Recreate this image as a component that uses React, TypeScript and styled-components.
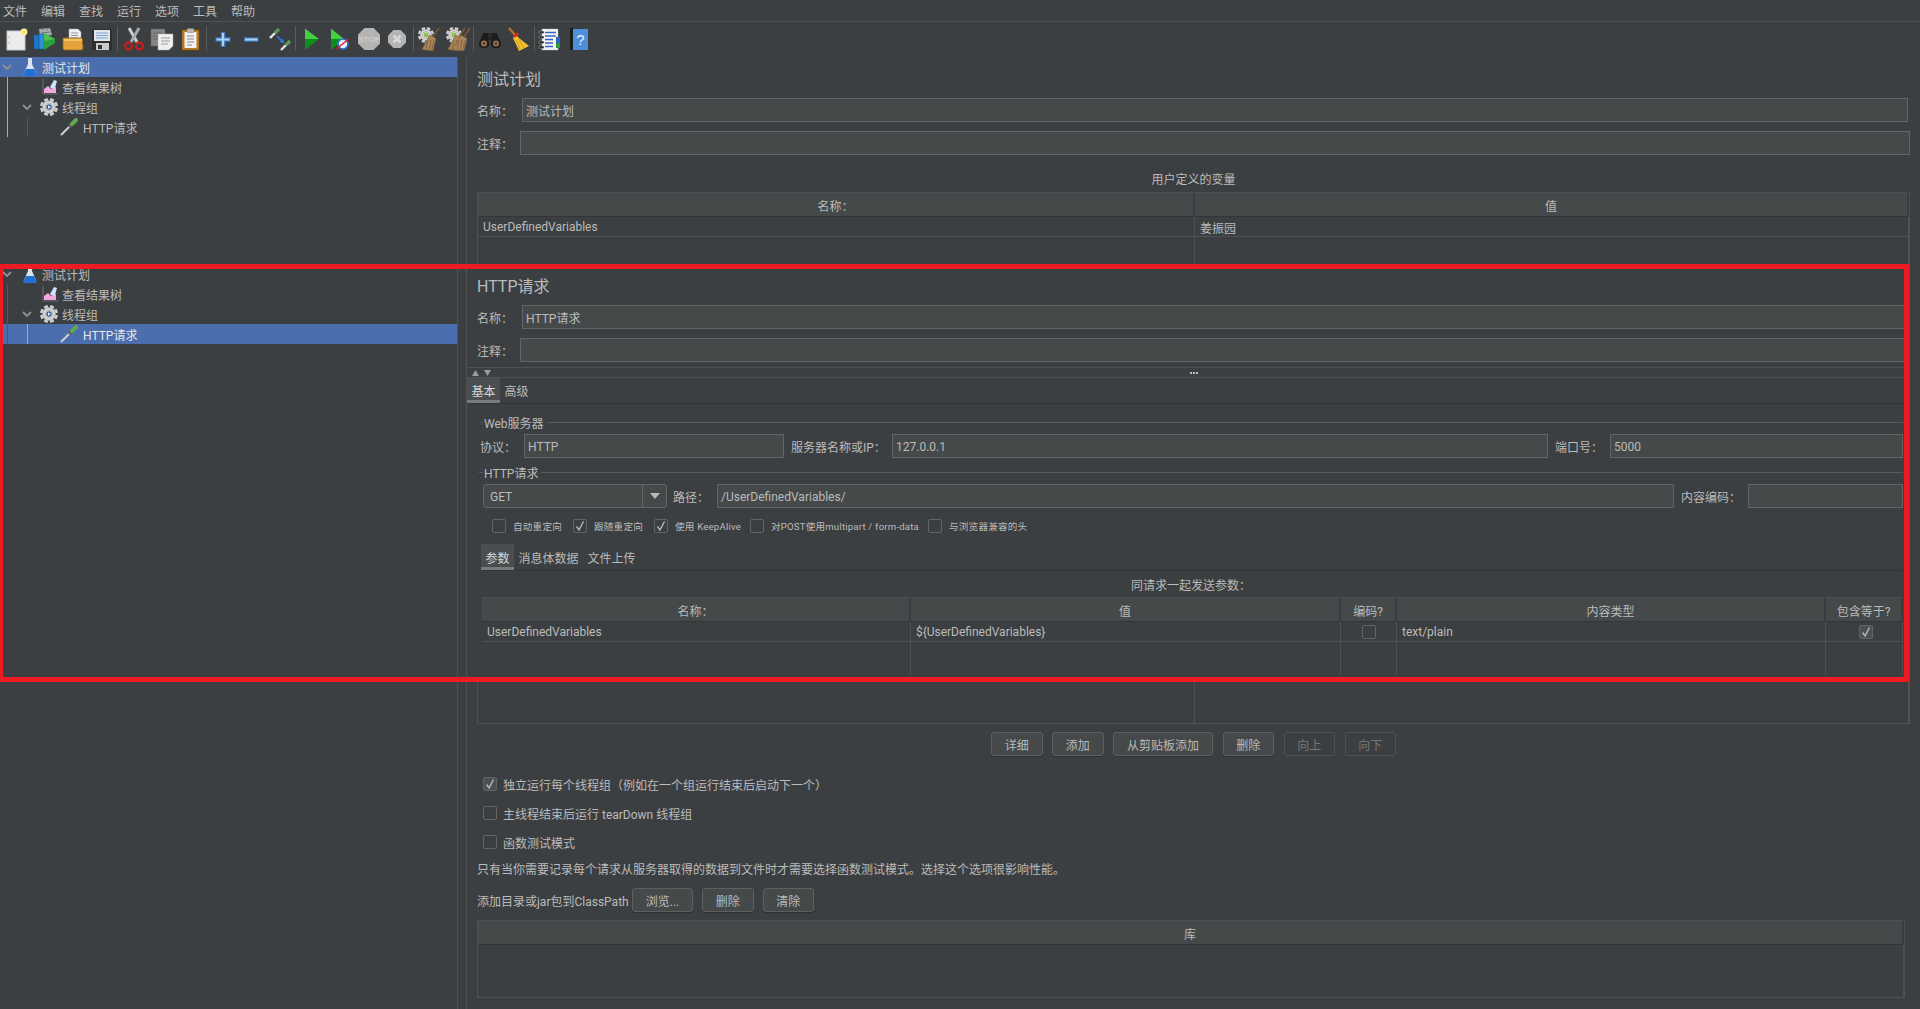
import React from "react";
import styled, { createGlobalStyle } from "styled-components";

const MENUS = ["文件", "编辑", "查找", "运行", "选项", "工具", "帮助"];

const Svg = ({ size = 24, children }: any) => (
  <svg width={size} height={size} viewBox="0 0 24 24">
    {children}
  </svg>
);

const Gear = ({ cx, cy, r, hub }: any) => (
  <g>
    {Array.from({ length: 4 }).map((_, i) => (
      <rect
        key={i}
        x={cx - r * 0.22}
        y={cy - r}
        width={r * 0.44}
        height={r * 2}
        fill="#cfcfcf"
        transform={`rotate(${i * 45 + 22.5} ${cx} ${cy})`}
      />
    ))}
    <circle cx={cx} cy={cy} r={r * 0.7} fill="#d8d8d8" stroke="#8f8f8f" strokeWidth={0.5} />
    <circle cx={cx} cy={cy} r={r * 0.42} fill="#f1f1f1" stroke="#7d7d7d" strokeWidth={0.5} />
    <circle cx={cx} cy={cy} r={r * 0.3} fill={hub} />
  </g>
);

const BrownBroom = ({ x = 0 }: any) => (
  <g transform={`translate(${x} 0)`}>
    <path d="M22 1 L15 11" stroke="#7d5a33" strokeWidth="1.6" />
    <path d="M12.500 8 L19 11.500 L16 24 L5 22.500 Z" fill="#a9835a" stroke="#7a5a38" strokeWidth="0.5" />
    <path d="M11 13 L9 22 M14 13 L12.500 23 M17 13 L15 23" stroke="#7a5a38" strokeWidth="0.7" />
  </g>
);

const NewIcon = () => (
  <Svg>
    <rect x="3" y="4" width="18" height="19" fill="#ececec" stroke="#c8c8c8" />
    <circle cx="5" cy="10" r="0.7" fill="#999" />
    <circle cx="5" cy="16" r="0.7" fill="#999" />
    <circle cx="20" cy="5" r="3.4" fill="#fff2a0" />
    <circle cx="20" cy="5" r="1.8" fill="#ffe040" />
  </Svg>
);
const TemplatesIcon = () => (
  <Svg>
    <path d="M6 2 L17 1 L19 8 L7 9 Z" fill="#a8afb0" />
    <path d="M9 3 L12 1 M13 3 L16 1 M8 6 L17 5" stroke="#6d7475" strokeWidth="1" />
    <rect x="1" y="8" width="5" height="14" fill="#1f78c8" stroke="#0d4f8f" strokeWidth="0.5" />
    <rect x="6" y="7" width="5" height="15" fill="#2f8fd8" stroke="#0d4f8f" strokeWidth="0.5" />
    <path d="M11 6 L22 12 V16 L11 23 Z" fill="#27a13a" />
    <path d="M11 6 L22 12 L11 14 Z" fill="#4dc24f" />
  </Svg>
);
const OpenIcon = () => (
  <Svg>
    <path d="M8 2 H17 L20 5 V14 H8 Z" fill="#eee" stroke="#aaa" strokeWidth="0.5" />
    <path d="M10 6 H17 M10 8.5 H17 M10 11 H17" stroke="#999" strokeWidth="1" />
    <path d="M2 11 H21 L22 21 Q22 23 20 23 H4 Q2 23 2 21 Z" fill="#e3a33a" stroke="#96671c" strokeWidth="0.8" />
    <rect x="3" y="12" width="18" height="2" fill="#f2c265" />
  </Svg>
);
const SaveIcon = () => (
  <Svg>
    <rect x="2" y="2" width="20" height="21" rx="1.5" fill="#2e2e2e" />
    <rect x="4" y="3" width="16" height="11" fill="#dfe6ee" />
    <path d="M6 6 H18 M6 8.5 H18 M6 11 H18" stroke="#7fa3cf" strokeWidth="1" />
    <rect x="6" y="16" width="13" height="7" fill="#c9c9c9" />
    <rect x="8" y="18" width="4" height="4" fill="#333" />
  </Svg>
);
const CutIcon = () => (
  <Svg>
    <path d="M7 1 L15 15" stroke="#cfcfcf" strokeWidth="3" />
    <path d="M17 1 L9 15" stroke="#a9a9a9" strokeWidth="3" />
    <circle cx="6.5" cy="19" r="3.4" fill="none" stroke="#c81e1e" strokeWidth="2.2" />
    <circle cx="17.5" cy="19" r="3.4" fill="none" stroke="#c81e1e" strokeWidth="2.2" />
  </Svg>
);
const CopyIcon = () => (
  <Svg>
    <rect x="1" y="2" width="14" height="17" fill="#858585" stroke="#666" strokeWidth="0.5" />
    <path d="M3 6 H12 M3 9 H12 M3 12 H8" stroke="#666" strokeWidth="1" />
    <path d="M8 7 H23 V19 L19 23 H8 Z" fill="#efefef" stroke="#aaa" strokeWidth="0.5" />
    <path d="M11 11 H20 M11 14 H20 M11 17 H18" stroke="#999" strokeWidth="1" />
  </Svg>
);
const PasteIcon = () => (
  <Svg>
    <rect x="3" y="3" width="17" height="20" rx="1" fill="#bd7a22" stroke="#85540f" strokeWidth="0.6" />
    <rect x="5.5" y="5" width="12" height="16" fill="#f1f1f1" />
    <rect x="8" y="1.5" width="7" height="4" rx="1" fill="#b9b9b9" stroke="#777" strokeWidth="0.5" />
    <path d="M8 9 H15 M8 12 H15 M8 15 H15 M8 18 H13" stroke="#888" strokeWidth="1" />
  </Svg>
);
const PlusIcon = () => (
  <Svg>
    <path d="M12 5 V20 M4.5 12.5 H19.5" stroke="#3a78bd" strokeWidth="4.4" />
    <path d="M12 6 V19 M5.5 12.5 H18.5" stroke="#a9d0f5" strokeWidth="2.2" />
  </Svg>
);
const MinusIcon = () => (
  <Svg>
    <path d="M5 12.5 H19.5" stroke="#3a78bd" strokeWidth="4.4" />
    <path d="M6 12.5 H18.5" stroke="#a9d0f5" strokeWidth="2.2" />
  </Svg>
);
const ToggleIcon = () => (
  <Svg>
    <path d="M2 11 L7 6" stroke="#e8e8e8" strokeWidth="2.4" />
    <path d="M7 6 L11 2" stroke="#5f9a55" strokeWidth="3.2" />
    <path d="M9 9 L15 15" stroke="#2a7ad9" strokeWidth="1.6" />
    <path d="M16.5 16.5 L11.5 15 L15 11.5 Z" fill="#2a7ad9" />
    <path d="M13 23 L18 18" stroke="#e0e0e0" strokeWidth="2.4" />
    <path d="M18 18 L22 14" stroke="#5f9a55" strokeWidth="3.2" />
  </Svg>
);
const StartIcon = () => (
  <Svg>
    <path d="M5 1.5 L19 12 L5 12 Z" fill="#43cf3f" />
    <path d="M5 12 L19 12 L5 23 Z" fill="#0a8f1c" />
  </Svg>
);
const StartNoPauseIcon = () => (
  <Svg>
    <path d="M3 1.5 L16 12 L3 12 Z" fill="#43cf3f" />
    <path d="M3 12 L16 12 L3 23 Z" fill="#0a8f1c" />
    <circle cx="15" cy="17" r="5" fill="#e6eefb" stroke="#2a6fd0" strokeWidth="1.6" />
    <path d="M8 22 L21 12" stroke="#d61f1f" strokeWidth="1.4" />
  </Svg>
);
const StopIcon = () => (
  <svg width="24" height="24" viewBox="0 0 24 24">
    <path d="M7.5 1 H16.5 L23 7.5 V16.5 L16.5 23 H7.5 L1 16.5 V7.5 Z" fill="#b4b4b4" />
    <text x="12" y="15" textAnchor="middle" fontSize="8" fontWeight="700" fontFamily="Liberation Sans" fill="#cecece">
      STOP
    </text>
  </svg>
);
const ShutdownIcon = () => (
  <Svg>
    <path d="M8.5 3 H15.5 L21 8.5 V15.5 L15.5 21 H8.5 L3 15.5 V8.5 Z" fill="#b4b4b4" />
    <path d="M8.5 8.5 L15.5 15.5 M15.5 8.5 L8.5 15.5" stroke="#d8d8d8" strokeWidth="2.6" />
  </Svg>
);
const ClearIcon = () => (
  <Svg>
    <Gear cx={9} cy={8} r={8} hub="#8bc34a" />
    <BrownBroom />
  </Svg>
);
const ClearAllIcon = () => (
  <Svg>
    <Gear cx={8} cy={8} r={8} hub="#8bc34a" />
    <BrownBroom x={-3} />
    <BrownBroom x={2} />
  </Svg>
);
const BinocularsIcon = () => (
  <Svg>
    <rect x="8" y="6" width="8" height="7" fill="#2a2a2a" />
    <path d="M5 6 H10 L11 18 H1 Z" fill="#1c1c1c" />
    <path d="M14 6 H19 L23 18 H13 Z" fill="#1c1c1c" />
    <circle cx="6" cy="16.5" r="5" fill="#1c1c1c" />
    <circle cx="18" cy="16.5" r="5" fill="#1c1c1c" />
    <circle cx="6" cy="16.5" r="3" fill="#9a7458" />
    <circle cx="18" cy="16.5" r="3" fill="#9a7458" />
    <circle cx="6" cy="16.5" r="1.3" fill="#4a3527" />
    <circle cx="18" cy="16.5" r="1.3" fill="#4a3527" />
  </Svg>
);
const BroomIcon = () => (
  <Svg>
    <path d="M3 1 L10 9" stroke="#a66f2c" strokeWidth="2.6" />
    <path d="M9 7 L13 11 L23 19 L13 24 L7 11 Z" fill="#efc12f" />
    <path d="M10 13 L14 22 M13 12 L18 21" stroke="#c2941a" strokeWidth="0.8" />
    <path d="M7.5 10 L12.5 6.5" stroke="#d8261f" strokeWidth="2.4" />
  </Svg>
);
const FunctionIcon = () => (
  <Svg>
    <rect x="4" y="2" width="16" height="21" fill="#f4f4f4" stroke="#bbb" strokeWidth="0.4" />
    <path d="M7 5.5 H18 M7 9 H18 M7 12.5 H15 M7 16 H15 M7 19.5 H15" stroke="#2f66c6" strokeWidth="1.3" />
    <rect x="18" y="10" width="4" height="6" fill="#2d63c0" />
    <rect x="18" y="16" width="4" height="5" fill="#2a9a3c" />
    {[5, 10, 15, 20].map((y) => (
      <rect key={y} x="1" y={y - 1} width="5" height="2.4" rx="1" fill="#222" stroke="#ddd" strokeWidth="0.4" />
    ))}
  </Svg>
);
const HelpIcon = () => (
  <Svg>
    <rect x="3" y="1" width="4" height="22" fill="#1d1d1d" />
    <rect x="6" y="2" width="15" height="21" fill="#4f8edb" />
    <text x="13.5" y="18" textAnchor="middle" fontSize="15" fontFamily="Liberation Sans" fill="#e9f1fb">
      ?
    </text>
  </Svg>
);

const TOOLS: any[] = [
  [NewIcon, TemplatesIcon, OpenIcon, SaveIcon],
  [CutIcon, CopyIcon, PasteIcon],
  [PlusIcon, MinusIcon, ToggleIcon],
  [StartIcon, StartNoPauseIcon, StopIcon, ShutdownIcon],
  [ClearIcon, ClearAllIcon],
  [BinocularsIcon, BroomIcon],
  [FunctionIcon, HelpIcon],
];

const FlaskIcon = () => (
  <svg width="14" height="20" viewBox="0 0 14 20">
    <path d="M5 1 H9 V7 L13 16 Q14 19 11.500 19 H2.500 Q0 19 1 16 L5 7 Z" fill="#dbe3ec" />
    <path d="M3 12 H11 L13 16 Q14 19 11.500 19 H2.500 Q0 19 1 16 Z" fill="#1f6fd6" />
  </svg>
);
const ResultTreeIcon = () => (
  <svg width="16" height="18" viewBox="0 0 16 18">
    <path d="M1 1 V16 H16" stroke="#6d6d6d" fill="none" />
    <path d="M2 15 V11 L6 8 L9 11 L14 9 V15 Z" fill="#f4a6e0" />
    <path d="M8 9 L12 2 L15 3 L13 10 Q10 12 8 9 Z" fill="#cfe2fb" />
  </svg>
);
const ThreadGroupIcon = () => (
  <svg width="18" height="18" viewBox="0 0 18 18">
    <Gear cx={9} cy={9} r={9} hub="#2f5f9f" />
    <path d="M8 7.200 L11 9 L8 10.800 Z" fill="#dfe9f7" />
  </svg>
);
const SamplerIcon = () => (
  <svg width="18" height="18" viewBox="0 0 18 18">
    <path d="M1 17 L10 8" stroke="#d0d0d0" strokeWidth="2" />
    <path d="M9 9 L13 5" stroke="#5c5c5c" strokeWidth="3.500" />
    <path d="M12 6 L16 2" stroke="#62a650" strokeWidth="4" strokeLinecap="round" />
  </svg>
);

const Chevron = () => (
  <ChevronBox>
    <svg width="10" height="6" viewBox="0 0 10 6">
      <path d="M1 1 L5 5 L9 1" fill="none" stroke="#8e9193" strokeWidth="1.800" />
    </svg>
  </ChevronBox>
);

const Tree = ({ active }: any) => {
  const onPlan = active === "plan";
  return (
    <TreePane>
      <TreeRow $selected={onPlan}>
        <Chevron />
        <NodeSlot $gap={9} $width={14}>
          <FlaskIcon />
        </NodeSlot>
        <NodeText $gap={5}>测试计划</NodeText>
      </TreeRow>
      <TreeRow>
        <Guide $lit={onPlan} />
        <NodeSlot $gap={15} $width={16}>
          <ResultTreeIcon />
        </NodeSlot>
        <NodeText $gap={4}>查看结果树</NodeText>
      </TreeRow>
      <TreeRow>
        <Guide $lit={onPlan} />
        <Chevron />
        <NodeSlot $gap={6} $width={18}>
          <ThreadGroupIcon />
        </NodeSlot>
        <NodeText $gap={4}>线程组</NodeText>
      </TreeRow>
      <TreeRow $selected={!onPlan}>
        <Guide $lit={onPlan} />
        <Guide $lit={!onPlan} />
        <NodeSlot $gap={13} $width={18}>
          <SamplerIcon />
        </NodeSlot>
        <NodeText $gap={5}>HTTP请求</NodeText>
      </TreeRow>
    </TreePane>
  );
};

const Tick = () => (
  <svg width="12" height="12" viewBox="0 0 12 12">
    <path d="M2.500 6.500 L5 10 L9.500 1.500" fill="none" stroke="#b8b8b8" strokeWidth="1.400" />
  </svg>
);

const Check = ({ checked, filled }: any) => (
  <CheckBox $filled={filled}>{checked && <Tick />}</CheckBox>
);

const OPTIONS = [
  { label: "自动重定向", checked: false, width: 81 },
  { label: "跟随重定向", checked: true, width: 81 },
  { label: "使用 KeepAlive", checked: true, width: 96 },
  { label: "对POST使用multipart / form-data", checked: false, width: 178 },
  { label: "与浏览器兼容的头", checked: false, width: 120 },
];

const HttpPanel = () => (
  <>
    <Head>
      <Title>HTTP请求</Title>
      <FieldRow>
        <Label $width={45}>名称：</Label>
        <TextField>HTTP请求</TextField>
      </FieldRow>
      <FieldRow $top={9}>
        <Label $width={43}>注释：</Label>
        <TextField />
      </FieldRow>
    </Head>
    <SplitStrip>
      <SplitArrows>
        <svg width="20" height="6" viewBox="0 0 20 6">
          <path d="M0 6 L3.500 0 L7 6 Z M12 0 L19 0 L15.500 6 Z" fill="#9c9c9c" />
        </svg>
      </SplitArrows>
      <Dots>
        <i />
        <i />
        <i />
      </Dots>
      <span />
    </SplitStrip>
    <TabBar>
      <Tab $active>基本</Tab>
      <Tab>高级</Tab>
    </TabBar>
    <Section>
      <Legend>Web服务器</Legend>
      <FieldRow $left={1}>
        <Label $width={44}>协议：</Label>
        <TextField $width={260}>HTTP</TextField>
        <Label $width={101} $gap={7}>服务器名称或IP：</Label>
        <TextField $width={656}>127.0.0.1</TextField>
        <Label $width={55} $gap={7}>端口号：</Label>
        <TextField>5000</TextField>
      </FieldRow>
      <Legend $top={5}>HTTP请求</Legend>
      <FieldRow $left={4}>
        <Combo>
          <ComboValue>GET</ComboValue>
          <ComboArrow>
            <svg width="10" height="6" viewBox="0 0 10 6">
              <path d="M0 0 H10 L5 6 Z" fill="#bbbbbb" />
            </svg>
          </ComboArrow>
        </Combo>
        <Label $width={44} $gap={6}>路径：</Label>
        <TextField $width={957}>/UserDefinedVariables/</TextField>
        <Label $width={67} $gap={7}>内容编码：</Label>
        <TextField />
      </FieldRow>
      <OptionRow>
        {OPTIONS.map((o) => (
          <Option key={o.label} $width={o.width}>
            <Check checked={o.checked} />
            <OptionText>{o.label}</OptionText>
          </Option>
        ))}
      </OptionRow>
      <InnerTabs>
        <Tab $active>参数</Tab>
        <Tab>消息体数据</Tab>
        <Tab>文件上传</Tab>
      </InnerTabs>
      <Caption $height={26}>同请求一起发送参数：</Caption>
      <Grid $cols="429px 430px 56px 429px 1fr" $height={77} $indent={3} $bare>
        <HeadCell>名称：</HeadCell>
        <HeadCell>值</HeadCell>
        <HeadCell>编码?</HeadCell>
        <HeadCell>内容类型</HeadCell>
        <HeadCell>包含等于?</HeadCell>
        <Cell>UserDefinedVariables</Cell>
        <Cell>{"${UserDefinedVariables}"}</Cell>
        <Cell $center>
          <Check />
        </Cell>
        <Cell>text/plain</Cell>
        <Cell $center $nudge={4}>
          <Check checked filled />
        </Cell>
        <FillCell />
        <FillCell />
        <FillCell />
        <FillCell />
        <FillCell />
      </Grid>
    </Section>
  </>
);

const App = () => (
  <>
    <Reset />
    <Window>
      <MenuBar>
        {MENUS.map((m) => (
          <MenuItem key={m}>{m}</MenuItem>
        ))}
      </MenuBar>
      <Toolbar>
        {TOOLS.map((group, i) => (
          <React.Fragment key={i}>
            {i > 0 && <ToolSep />}
            {group.map((Icon: any, j: number) => (
              <ToolButton key={j}>
                <Icon />
              </ToolButton>
            ))}
          </React.Fragment>
        ))}
      </Toolbar>
      <Split>
        <Tree active="plan" />
        <Gutter />
        <Pane>
          <Head>
            <Title>测试计划</Title>
            <FieldRow $right={2}>
              <Label $width={45}>名称：</Label>
              <TextField>测试计划</TextField>
            </FieldRow>
            <FieldRow $top={9}>
              <Label $width={43}>注释：</Label>
              <TextField />
            </FieldRow>
            <Caption $height={37} $top={10}>用户定义的变量</Caption>
            <Grid $cols="717px 1fr" $height={532}>
              <HeadCell>名称：</HeadCell>
              <HeadCell>值</HeadCell>
              <Cell>UserDefinedVariables</Cell>
              <Cell>姜振园</Cell>
              <FillCell />
              <FillCell />
            </Grid>
            <ButtonRow>
              <Button>详细</Button>
              <Button>添加</Button>
              <Button $wide>从剪贴板添加</Button>
              <Button>删除</Button>
              <Button disabled>向上</Button>
              <Button disabled>向下</Button>
            </ButtonRow>
            <CheckRow $top={21}>
              <Check checked filled />
              独立运行每个线程组（例如在一个组运行结束后启动下一个）
            </CheckRow>
            <CheckRow $top={15}>
              <Check />
              主线程结束后运行 tearDown 线程组
            </CheckRow>
            <CheckRow $top={15}>
              <Check />
              函数测试模式
            </CheckRow>
            <Note>只有当你需要记录每个请求从服务器取得的数据到文件时才需要选择函数测试模式。选择这个选项很影响性能。</Note>
            <PathRow>
              <Label $width={155}>添加目录或jar包到ClassPath</Label>
              <Button $width={61}>浏览...</Button>
              <Button>删除</Button>
              <Button>清除</Button>
            </PathRow>
            <LibTable>
              <Grid $cols="1fr" $height={78} $rows="25px 1fr">
                <HeadCell>库</HeadCell>
                <FillCell />
              </Grid>
            </LibTable>
          </Head>
        </Pane>
      </Split>

      {/* pasted second screenshot with the red marker round it */}
      <Pasted>
        <Split>
          <Tree active="http" />
          <Gutter />
          <Pane>
            <HttpPanel />
          </Pane>
        </Split>
      </Pasted>
    </Window>
  </>
);

const Reset = createGlobalStyle`
  html, body {
    margin: 0;
    padding: 0;
    background: #3c3f41;
    overflow: hidden;
  }
  * {
    box-sizing: border-box;
  }
`;
const Window = styled.div`
  position: relative;
  width: 1920px;
  height: 1009px;
  overflow: hidden;
  background: #3c3f41;
  color: #bbbbbb;
  font-family: Roboto, "Noto Sans CJK SC", sans-serif;
  font-size: 12px;
`;
const MenuBar = styled.div`
  display: flex;
  align-items: center;
  column-gap: 14px;
  height: 22px;
  padding-left: 3px;
  border-bottom: 1px solid #515151;
`;
const MenuItem = styled.div`
  width: 24px;
  white-space: nowrap;
`;
const Toolbar = styled.div`
  display: flex;
  align-items: center;
  height: 35px;
  padding: 0 0 2px 2px;
`;
const ToolButton = styled.div`
  display: flex;
  justify-content: center;
  width: 28.5px;
`;
const ToolSep = styled.div`
  width: 1px;
  height: 25px;
  margin: 0 1.5px 0 1px;
  background: #5a5d5f;
`;
const Split = styled.div`
  display: grid;
  grid-template-columns: 457px 10px 1453px;
`;
const TreePane = styled.div`
  display: flex;
  flex-direction: column;
`;
const TreeRow = styled.div<{ $selected?: boolean }>`
  display: flex;
  align-items: center;
  height: 20px;
  padding-left: 7px;
  background: ${(p) => (p.$selected ? "#4b6eaf" : "transparent")};
  color: ${(p) => (p.$selected ? "#e6e6e6" : "#bbbbbb")};
`;
const Guide = styled.span<{ $lit?: boolean }>`
  flex: none;
  width: 20px;
  height: 100%;
  border-left: 1px solid ${(p) => (p.$lit ? "#7fb4e6" : "#55585a")};
`;
const ChevronBox = styled.span`
  flex: none;
  display: flex;
  justify-content: center;
  align-items: center;
  width: 14px;
  margin-left: -7px;
`;
const NodeSlot = styled.span<{ $gap: number; $width: number }>`
  flex: none;
  display: flex;
  justify-content: center;
  width: ${(p) => p.$width}px;
  margin-left: ${(p) => p.$gap}px;
`;
const NodeText = styled.span<{ $gap: number }>`
  margin-left: ${(p) => p.$gap}px;
  white-space: nowrap;
`;
const Gutter = styled.div`
  border-left: 1px solid #515151;
  border-right: 1px solid #515151;
`;
const Pane = styled.div`
  display: flex;
  flex-direction: column;
  min-height: 952px;
`;
const Head = styled.div`
  display: flex;
  flex-direction: column;
  padding: 0 10px;
`;
const Title = styled.div`
  display: flex;
  align-items: center;
  height: 41px;
  font-size: 16px;
`;
const FieldRow = styled.div<{ $top?: number; $left?: number; $right?: number }>`
  display: flex;
  align-items: center;
  height: 24px;
  margin-top: ${(p) => p.$top || 0}px;
  margin-left: ${(p) => p.$left || 0}px;
  margin-right: ${(p) => p.$right || 0}px;
`;
const Label = styled.div<{ $width: number; $gap?: number }>`
  flex: none;
  width: ${(p) => p.$width}px;
  margin-left: ${(p) => p.$gap || 0}px;
  white-space: nowrap;
`;
const TextField = styled.div<{ $width?: number }>`
  display: flex;
  align-items: center;
  flex: ${(p) => (p.$width ? `none` : 1)};
  width: ${(p) => (p.$width ? `${p.$width}px` : "auto")};
  height: 24px;
  padding: 1px 3px 0;
  background: #45494a;
  border: 1px solid #646464;
  white-space: nowrap;
`;
const Caption = styled.div<{ $height: number; $top?: number }>`
  display: flex;
  align-items: center;
  justify-content: center;
  height: ${(p) => p.$height}px;
  padding-top: ${(p) => p.$top || 0}px;
`;
const Grid = styled.div<{ $cols: string; $height: number; $rows?: string; $indent?: number; $bare?: boolean }>`
  display: grid;
  grid-template-columns: ${(p) => p.$cols};
  grid-template-rows: ${(p) => p.$rows || "25px 20px 1fr"};
  height: ${(p) => p.$height}px;
  margin-left: ${(p) => p.$indent || 0}px;
  ${(p) =>
    !p.$bare &&
    `
    border-left: 1px solid #515151;
    border-right: 1px solid #515151;
    border-bottom: 1px solid #515151;
  `}
`;
const HeadCell = styled.div`
  display: flex;
  align-items: center;
  justify-content: center;
  padding-top: 1px;
  background: #45494a;
  border-top: 1px solid #4c5052;
  border-right: 2px solid #3a3d3f;
  border-bottom: 1px solid #333537;
`;
const Cell = styled.div<{ $center?: boolean; $nudge?: number }>`
  display: flex;
  align-items: center;
  justify-content: ${(p) => (p.$center ? "center" : "flex-start")};
  padding: 1px 5px 0 ${(p) => 5 + (p.$nudge || 0)}px;
  border-right: 1px solid #515151;
  border-bottom: 1px solid #515151;
  white-space: nowrap;
`;
const FillCell = styled.div`
  border-right: 1px solid #515151;
`;
const ButtonRow = styled.div`
  display: flex;
  justify-content: center;
  column-gap: 9.5px;
  margin-top: 8px;
`;
const Button = styled.button<{ $wide?: boolean; $width?: number }>`
  flex: none;
  width: ${(p) => p.$width || (p.$wide ? 100 : 51.5)}px;
  height: 24px;
  padding: 0;
  background: #45494a;
  color: #bbbbbb;
  border: 1px solid #5e6060;
  border-radius: 3px;
  box-shadow: 0 1px 0 #2e3032;
  font: inherit;
  &:disabled {
    background: transparent;
    color: #777777;
    border-color: #515151;
    box-shadow: none;
  }
`;
const CheckBox = styled.span<{ $filled?: boolean }>`
  flex: none;
  display: flex;
  align-items: center;
  justify-content: center;
  width: 14px;
  height: 14px;
  background: ${(p) => (p.$filled ? "#4c5052" : "transparent")};
  border: 1px solid #646464;
  border-radius: 2px;
`;
const CheckRow = styled.div<{ $top: number }>`
  display: flex;
  align-items: center;
  column-gap: 6px;
  height: 14px;
  margin-top: ${(p) => p.$top}px;
  padding-left: 6px;
`;
const Note = styled.div`
  display: flex;
  align-items: center;
  height: 20px;
  margin-top: 9px;
`;
const PathRow = styled.div`
  display: flex;
  align-items: center;
  column-gap: 9px;
  height: 24px;
  margin-top: 10px;
  & > :first-child {
    margin-right: -9px;
  }
`;
const LibTable = styled.div`
  margin: 8px 5px 0 0;
`;
const Pasted = styled.div`
  position: absolute;
  top: 264px;
  left: 0;
  width: 1909px;
  height: 418px;
  overflow: hidden;
  background: #3c3f41;
  &::after {
    content: "";
    position: absolute;
    inset: 0;
    border: 5px solid #ed1c24;
    border-left-width: 3px;
  }
`;
const SplitStrip = styled.div`
  display: grid;
  grid-template-columns: 1fr auto 1fr;
  align-items: center;
  height: 10px;
  margin-top: 5px;
  border-top: 1px solid #515151;
`;
const SplitArrows = styled.div`
  display: flex;
  padding-left: 5px;
`;
const Dots = styled.div`
  display: flex;
  column-gap: 1px;
  & > i {
    width: 2px;
    height: 2px;
    background: #bbbbbb;
  }
`;
const TabBar = styled.div`
  display: flex;
  height: 27px;
  border-top: 1px solid #515151;
  border-bottom: 1px solid #323537;
`;
const Tab = styled.div<{ $active?: boolean }>`
  display: flex;
  align-items: center;
  padding: 3px 4.5px 0;
  background: ${(p) => (p.$active ? "#4b4e50" : "transparent")};
  border-bottom: 3px solid ${(p) => (p.$active ? "#787b7d" : "transparent")};
  color: ${(p) => (p.$active ? "#d8d8d8" : "#bbbbbb")};
  white-space: nowrap;
`;
const Section = styled.div`
  display: flex;
  flex-direction: column;
  padding: 9px 17px 0 12px;
`;
const Legend = styled.div<{ $top?: number }>`
  display: flex;
  align-items: center;
  column-gap: 1px;
  height: 18px;
  margin-top: ${(p) => p.$top || 0}px;
  margin-bottom: 3px;
  &::before {
    content: "";
    width: 4px;
    height: 1px;
    background: #595c5e;
  }
  &::after {
    content: "";
    flex: 1;
    height: 1px;
    margin-left: 2px;
    background: #595c5e;
  }
`;
const Combo = styled.div`
  flex: none;
  display: flex;
  width: 184px;
  height: 24px;
  background: #45494a;
  border: 1px solid #646464;
  border-radius: 3px;
`;
const ComboValue = styled.div`
  display: flex;
  align-items: center;
  flex: 1;
  padding: 1px 0 0 6px;
  border-right: 1px solid #646464;
`;
const ComboArrow = styled.div`
  display: flex;
  align-items: center;
  justify-content: center;
  width: 23px;
`;
const OptionRow = styled.div`
  display: flex;
  align-items: center;
  height: 14px;
  margin: 11px 0 0 13px;
`;
const Option = styled.div<{ $width: number }>`
  flex: none;
  display: flex;
  align-items: center;
  column-gap: 7px;
  width: ${(p) => p.$width}px;
`;
const OptionText = styled.span`
  font-size: 9.6px;
  letter-spacing: 0.2px;
  white-space: nowrap;
`;
const InnerTabs = styled.div`
  display: flex;
  height: 27px;
  margin: 11px 0 0 2px;
  border-bottom: 1px solid #323537;
`;

export default App;
